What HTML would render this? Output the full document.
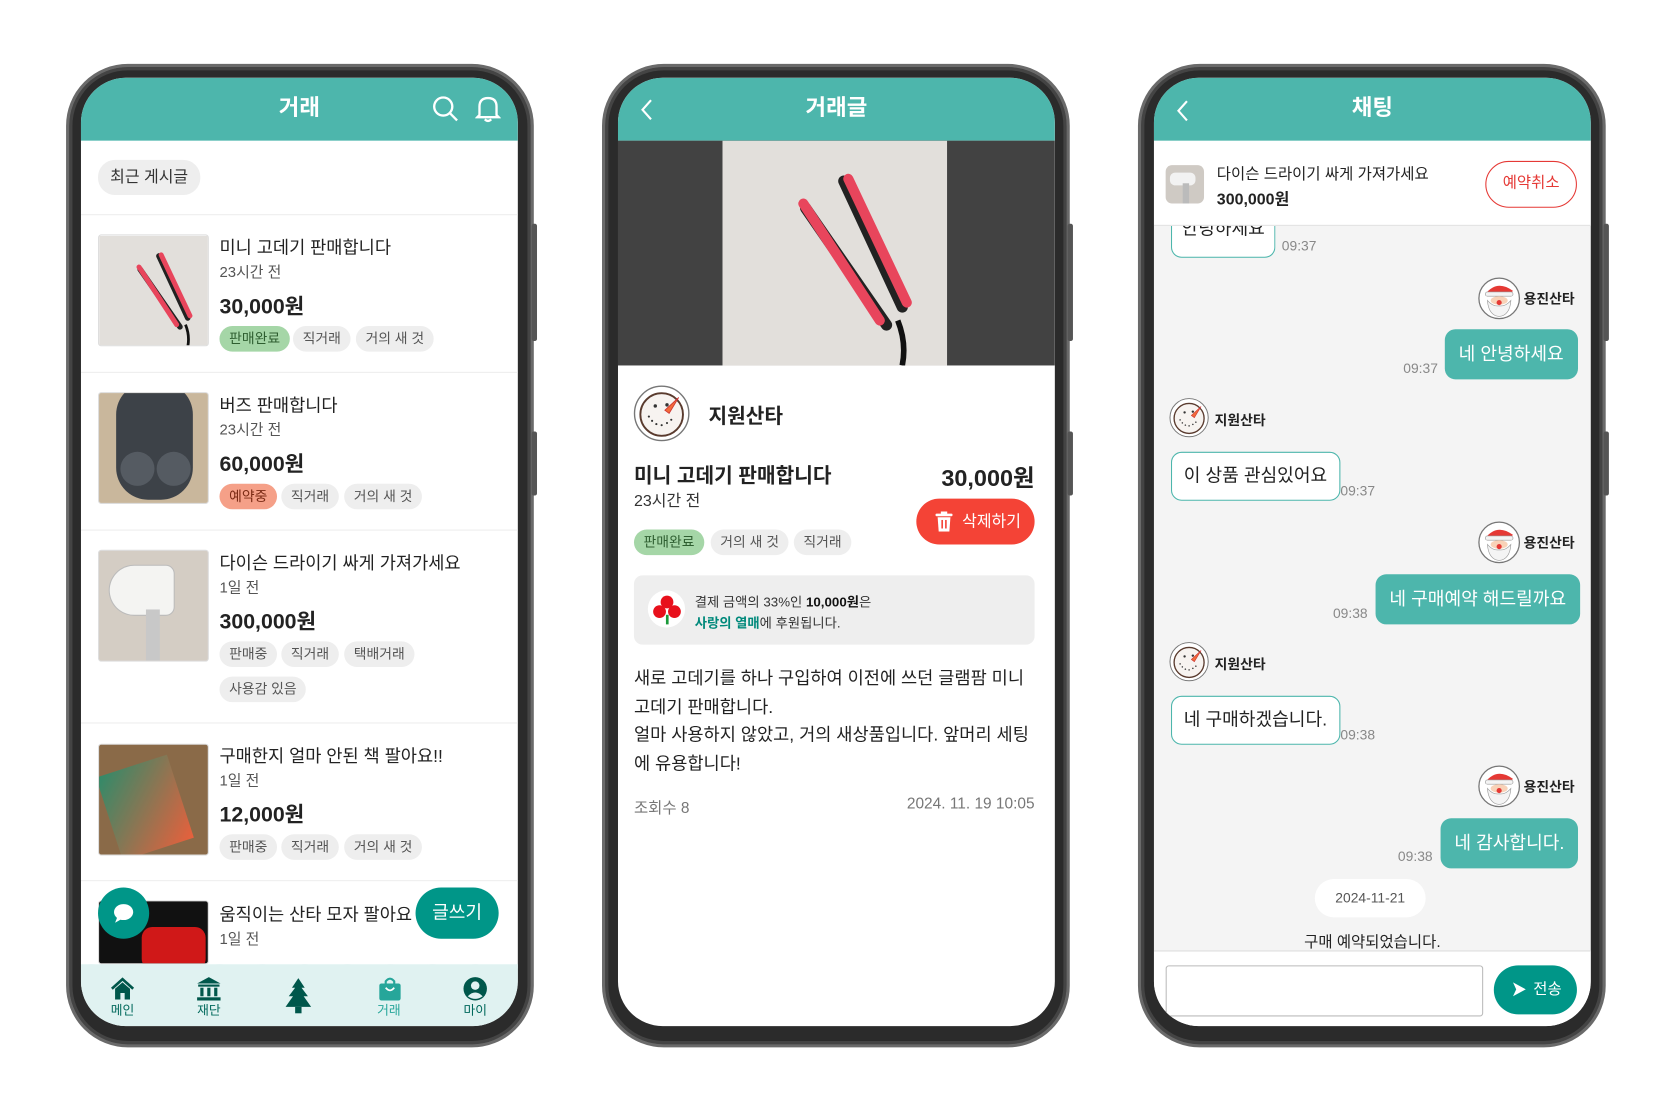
<!DOCTYPE html>
<html><head><meta charset="utf-8">
<style>
*{margin:0;padding:0;box-sizing:border-box}
html,body{width:1669px;height:1104px;overflow:hidden;background:#fff}
body{font-family:"Liberation Sans","Noto Sans CJK KR",sans-serif;color:#222}
#s{position:absolute;left:0;top:0;width:1560px;height:1032px;transform:scale(1.0655);transform-origin:0 0}
.a{position:absolute}
.phone{position:absolute;top:60px;width:439px;height:923px;border-radius:58px;background:#2b2b2b;border:3px solid #6a6a6a;box-shadow:inset 0 0 0 3px #444}
.screen{position:absolute;top:73px;width:410px;height:890px;border-radius:42px;overflow:hidden;background:#fff}
.hdr{position:absolute;left:0;top:0;width:410px;height:59px;background:#4db6ac;color:#fff;font-size:21px;font-weight:bold;text-align:center;line-height:58px}
.btn{position:absolute;width:5px;background:#555;border-radius:2px}
.tag{position:absolute;height:24px;line-height:24px;font-size:13px;color:#555;background:#eee;border-radius:12px;padding:0 9px}
.g{background:#a5d6a7;color:#2e5e30}
.o{background:#f5a088;color:#7a2a14}
.t1{font-size:16.5px;color:#222}
.t2{font-size:14px;color:#555}
.pr{font-size:20px;font-weight:bold;color:#222}
.div{position:absolute;left:0;width:410px;height:1px;background:#eee}
.th{position:absolute;left:16px;width:104px;height:105px;border:1px solid #ddd;border-radius:3px;overflow:hidden}
.wb{position:absolute;background:#fff;border:1.5px solid #4db6ac;border-radius:10px;font-size:17px;line-height:44px;padding:0 11px;color:#222}
.tb{position:absolute;background:#4db6ac;border-radius:10px;font-size:17px;line-height:47px;padding:0 13px;color:#fff}
.tm{position:absolute;font-size:13px;color:#888}
.nm{position:absolute;font-size:13px;font-weight:bold;color:#222}
.nav{position:absolute;font-size:12px;color:#00695c;text-align:center;width:40px}
</style></head><body>
<svg width="0" height="0" style="position:absolute">
<defs>
<symbol id="iron" viewBox="0 0 100 100">
<rect width="100" height="100" fill="#e2dfdb"/>
<path d="M78 80 Q82 90 80 100" stroke="#111" stroke-width="2.5" fill="none"/>
<path d="M37 30 L73 82" stroke="#222" stroke-width="5" stroke-linecap="round"/>
<path d="M54 18 L80 74" stroke="#222" stroke-width="5" stroke-linecap="round"/>
<path d="M36 28 L70 80" stroke="#e8455c" stroke-width="4.5" stroke-linecap="round"/>
<path d="M56 17 L82 72" stroke="#e8455c" stroke-width="4.5" stroke-linecap="round"/>
</symbol>
<symbol id="snow" viewBox="0 0 54 54">
<circle cx="27" cy="27" r="25.5" fill="#fff" stroke="#777" stroke-width="1.3"/>
<circle cx="27" cy="28" r="20" fill="#f7f3f0" stroke="#5a3b2e" stroke-width="1.8"/>
<circle cx="21" cy="20" r="1.6" fill="#333"/><circle cx="32" cy="19" r="1.6" fill="#333"/>
<path d="M30 24 L43 12 L34 27Z" fill="#f26b3a" stroke="#c33" stroke-width=".8"/>
<g fill="#333"><circle cx="15" cy="30" r="1"/><circle cx="18" cy="34" r="1"/><circle cx="22" cy="37" r="1"/><circle cx="27" cy="38" r="1"/><circle cx="32" cy="36" r="1"/><circle cx="36" cy="33" r="1"/></g>
</symbol>
<symbol id="santa" viewBox="0 0 40 40">
<circle cx="20" cy="20" r="19" fill="#fff" stroke="#777" stroke-width="1.2"/>
<path d="M7 16 Q18 2 33 13 L30 16 Z" fill="#e53935"/>
<rect x="7" y="14" width="26" height="4" rx="2" fill="#f4f4f4" stroke="#999" stroke-width=".6"/>
<ellipse cx="20" cy="22" rx="8" ry="4" fill="#f8d2b8"/>
<path d="M9 22 Q10 36 20 37 Q30 36 31 22 Q26 28 20 27 Q14 28 9 22Z" fill="#f4f4f4" stroke="#999" stroke-width=".6"/>
<circle cx="20" cy="24" r="2.4" fill="#e53935"/>
</symbol>
</defs></svg>
<div id="s">

<!-- PHONE 1 -->
<div class="phone" style="left:62px"></div>
<div class="btn" style="left:499px;top:210px;height:110px"></div>
<div class="btn" style="left:499px;top:405px;height:60px"></div>
<div class="screen" style="left:76px">
 <div class="hdr">거래</div>
 <svg class="a" style="left:329px;top:16px" width="26" height="26" viewBox="0 0 26 26" fill="none" stroke="#fff" stroke-width="2.2"><circle cx="11" cy="11" r="8.5"/><path d="M17.5 17.5 L24 24"/></svg>
 <svg class="a" style="left:370px;top:15px" width="24" height="28" viewBox="0 0 24 28" fill="none" stroke="#fff" stroke-width="2.2"><path d="M4 20 V12 Q4 4 12 4 Q20 4 20 12 V20 L22 22 H2 Z"/><path d="M9 24 Q12 27 15 24"/></svg>
 <div class="a" style="left:16px;top:77px;width:96px;height:33px;background:#eee;border-radius:16px;font-size:15px;line-height:33px;text-align:center;color:#333">최근 게시글</div>
 <div class="div" style="top:128px"></div>
 <!-- item1 -->
 <div class="th" style="top:147px"><svg width="104" height="105"><use href="#iron"/></svg></div>
 <div class="a t1" style="left:130px;top:146px">미니 고데기 판매합니다</div>
 <div class="a t2" style="left:130px;top:172px">23시간 전</div>
 <div class="a pr" style="left:130px;top:198px">30,000원</div>
 <div class="tag g" style="left:130px;top:233px">판매완료</div>
 <div class="tag" style="left:199px;top:233px">직거래</div>
 <div class="tag" style="left:258px;top:233px">거의 새 것</div>
 <div class="div" style="top:276px"></div>
 <!-- item2 -->
 <div class="th" style="top:295px;background:#c9b79c"><div class="a" style="left:16px;top:-10px;width:72px;height:110px;background:#3d4248;border-radius:30px"></div><div class="a" style="left:20px;top:55px;width:32px;height:32px;background:#555b62;border-radius:50%"></div><div class="a" style="left:54px;top:55px;width:32px;height:32px;background:#555b62;border-radius:50%"></div></div>
 <div class="a t1" style="left:130px;top:294px">버즈 판매합니다</div>
 <div class="a t2" style="left:130px;top:320px">23시간 전</div>
 <div class="a pr" style="left:130px;top:346px">60,000원</div>
 <div class="tag o" style="left:130px;top:381px">예약중</div>
 <div class="tag" style="left:188px;top:381px">직거래</div>
 <div class="tag" style="left:247px;top:381px">거의 새 것</div>
 <div class="div" style="top:424px"></div>
 <!-- item3 -->
 <div class="th" style="top:443px;background:#d4cdc4"><div class="a" style="left:10px;top:14px;width:60px;height:46px;background:#f4f4f2;border-radius:25px 8px 8px 25px;box-shadow:0 0 0 1px #bbb"></div><div class="a" style="left:44px;top:55px;width:13px;height:48px;background:#c8c8c8"></div></div>
 <div class="a t1" style="left:130px;top:442px">다이슨 드라이기 싸게 가져가세요</div>
 <div class="a t2" style="left:130px;top:468px">1일 전</div>
 <div class="a pr" style="left:130px;top:494px">300,000원</div>
 <div class="tag" style="left:130px;top:529px">판매중</div>
 <div class="tag" style="left:188px;top:529px">직거래</div>
 <div class="tag" style="left:247px;top:529px">택배거래</div>
 <div class="tag" style="left:130px;top:562px">사용감 있음</div>
 <div class="div" style="top:605px"></div>
 <!-- item4 -->
 <div class="th" style="top:625px;background:#8a6a48"><div class="a" style="left:8px;top:18px;width:70px;height:82px;background:linear-gradient(135deg,#2e8b6a,#e8603c);transform:rotate(-18deg)"></div></div>
 <div class="a t1" style="left:130px;top:623px">구매한지 얼마 안된 책 팔아요!!</div>
 <div class="a t2" style="left:130px;top:649px">1일 전</div>
 <div class="a pr" style="left:130px;top:675px">12,000원</div>
 <div class="tag" style="left:130px;top:710px">판매중</div>
 <div class="tag" style="left:188px;top:710px">직거래</div>
 <div class="tag" style="left:247px;top:710px">거의 새 것</div>
 <div class="div" style="top:753px"></div>
 <!-- item5 -->
 <div class="th" style="top:772px;height:60px;background:#111"><div class="a" style="left:40px;top:24px;width:60px;height:40px;background:#d01818;border-radius:10px"></div></div>
 <div class="a t1" style="left:130px;top:772px">움직이는 산타 모자 팔아요</div>
 <div class="a t2" style="left:130px;top:798px">1일 전</div>
 <div class="a" style="left:16px;top:760px;width:48px;height:48px;border-radius:50%;background:#009688"></div>
 <svg class="a" style="left:29px;top:774px" width="22" height="20" viewBox="0 0 22 20"><ellipse cx="11" cy="9" rx="9" ry="7.5" fill="#fff"/><path d="M5 14 L3 19 L10 15Z" fill="#fff"/></svg>
 <div class="a" style="left:314px;top:760px;width:78px;height:48px;border-radius:24px;background:#009688;color:#fff;font-size:17px;line-height:48px;text-align:center">글쓰기</div>
 <!-- nav -->
 <div class="a" style="left:0;top:832px;width:410px;height:58px;background:#e0f2f1"></div>
 <svg class="a" style="left:0;top:828px" width="410" height="8"><path d="M0 6 Q10 2 20 6 T40 6 T60 6 T80 6 T100 6 T120 6 T140 6 T160 6 T180 6 T200 6 T220 6 T240 6 T260 6 T280 6 T300 6 T320 6 T340 6 T360 6 T380 6 T400 6 T420 6 V8 H0Z" fill="#e0f2f1"/></svg>
 <svg class="a" style="left:27px;top:844px" width="24" height="22" viewBox="0 0 24 22"><path d="M2 11 L12 2 L22 11" stroke="#00574b" stroke-width="2.5" fill="none"/><path d="M5 11 V21 H10 V15 H14 V21 H19 V11 L12 5Z" fill="#00574b"/></svg>
 <div class="nav" style="left:19px;top:866px">메인</div>
 <svg class="a" style="left:108px;top:843px" width="24" height="24" viewBox="0 0 24 24" fill="#00574b"><path d="M12 1 L23 7 H1Z"/><rect x="2" y="8" width="20" height="2"/><rect x="4" y="11" width="3" height="8"/><rect x="10.5" y="11" width="3" height="8"/><rect x="17" y="11" width="3" height="8"/><rect x="1" y="20" width="22" height="3"/></svg>
 <div class="nav" style="left:100px;top:866px">재단</div>
 <svg class="a" style="left:191px;top:845px" width="26" height="36" viewBox="0 0 26 36" fill="#00574b"><path d="M13 0 L19 9 H16 L22 17 H18 L25 27 H1 L8 17 H4 L10 9 H7Z"/><rect x="10" y="27" width="6" height="6"/></svg>
 <svg class="a" style="left:279px;top:843px" width="22" height="24" viewBox="0 0 22 24"><rect x="1" y="7" width="20" height="16" rx="2" fill="#26a69a"/><path d="M7 9 V5 Q11 0 15 5 V9" stroke="#26a69a" stroke-width="2" fill="none"/><path d="M7 11 Q11 16 15 11" stroke="#fff" stroke-width="1.6" fill="none"/></svg>
 <div class="nav" style="left:269px;top:866px;color:#26a69a">거래</div>
 <svg class="a" style="left:358px;top:843px" width="24" height="24" viewBox="0 0 24 24"><circle cx="12" cy="12" r="11" fill="#00574b"/><circle cx="12" cy="9" r="4" fill="#e0f2f1"/><path d="M5 19 Q12 12 19 19 Q12 24 5 19Z" fill="#e0f2f1"/></svg>
 <div class="nav" style="left:350px;top:866px">마이</div>
</div>

<!-- PHONE 2 -->
<div class="phone" style="left:565px"></div>
<div class="btn" style="left:1002px;top:210px;height:110px"></div>
<div class="btn" style="left:1002px;top:405px;height:60px"></div>
<div class="screen" style="left:580px">
 <div class="hdr">거래글</div>
 <svg class="a" style="left:20px;top:19px" width="14" height="22" viewBox="0 0 14 22"><path d="M11 2 L3 11 L11 20" stroke="#fff" stroke-width="2" fill="none"/></svg>
 <div class="a" style="left:0;top:59px;width:410px;height:211px;background:#424242"></div>
 <svg class="a" style="left:98px;top:59px" width="211" height="211"><use href="#iron"/></svg>
 <svg class="a" style="left:14px;top:288px" width="54" height="54"><use href="#snow"/></svg>
 <div class="a" style="left:85px;top:303px;font-size:19px;font-weight:bold">지원산타</div>
 <div class="a" style="left:15px;top:359px;font-size:19px;font-weight:bold">미니 고데기 판매합니다</div>
 <div class="a" style="left:15px;top:386px;font-size:15px;color:#333">23시간 전</div>
 <div class="a" style="right:19px;top:358px;font-size:22px;font-weight:bold">30,000원</div>
 <div class="tag g" style="left:15px;top:424px;padding:0 9px">판매완료</div>
 <div class="tag" style="left:87px;top:424px;padding:0 9px">거의 새 것</div>
 <div class="tag" style="left:165px;top:424px;padding:0 9px">직거래</div>
 <div class="a" style="left:280px;top:395px;width:111px;height:43px;border-radius:22px;background:#f44336;color:#fff;font-size:15px;line-height:43px;padding-left:43px">삭제하기</div>
 <svg class="a" style="left:298px;top:407px" width="16" height="19" viewBox="0 0 16 19" fill="#fff"><rect x="0" y="2" width="16" height="2.5" rx="1"/><rect x="5" y="0" width="6" height="3"/><path d="M2 5.5 H14 L13 19 H3Z"/><rect x="5.5" y="8" width="1.5" height="8" fill="#f44336"/><rect x="9" y="8" width="1.5" height="8" fill="#f44336"/></svg>
 <div class="a" style="left:15px;top:467px;width:376px;height:65px;background:#eee;border-radius:8px"></div>
 <div class="a" style="left:28px;top:481px;width:35px;height:35px;border-radius:50%;background:#fff"></div>
 <svg class="a" style="left:31px;top:484px" width="30" height="30" viewBox="0 0 30 30" fill="#e8101c"><circle cx="15" cy="8" r="6"/><circle cx="8" cy="17" r="6"/><circle cx="22" cy="17" r="6"/><rect x="14" y="20" width="2.5" height="9" fill="#1a9a3a"/></svg>
 <div class="a" style="left:72px;top:481px;font-size:12.5px;color:#333">결제 금액의 33%인 <b style="color:#111">10,000원</b>은</div>
 <div class="a" style="left:72px;top:501px;font-size:12.5px;color:#333"><span style="color:#00897b;font-weight:bold">사랑의 열매</span>에 후원됩니다.</div>
 <div class="a" style="left:15px;top:551px;width:380px;font-size:16.5px;line-height:26.7px;color:#222">새로 고데기를 하나 구입하여 이전에 쓰던 글램팜 미니<br>고데기 판매합니다.<br>얼마 사용하지 않았고, 거의 새상품입니다. 앞머리 세팅<br>에 유용합니다!</div>
 <div class="a" style="left:15px;top:674px;font-size:14.5px;color:#777">조회수 8</div>
 <div class="a" style="right:19px;top:674px;font-size:14.5px;color:#777">2024. 11. 19 10:05</div>
</div>

<!-- PHONE 3 -->
<div class="phone" style="left:1068px"></div>
<div class="btn" style="left:1505px;top:210px;height:110px"></div>
<div class="btn" style="left:1505px;top:405px;height:60px"></div>
<div class="screen" style="left:1083px;background:#f4f4f4">
 <div class="a" style="left:0;top:59px;width:410px;height:80px;background:#fff;border-bottom:1px solid #e0e0e0"></div>
 <div class="hdr">채팅</div>
 <svg class="a" style="left:20px;top:20px" width="14" height="22" viewBox="0 0 14 22"><path d="M11 2 L3 11 L11 20" stroke="#fff" stroke-width="2" fill="none"/></svg>
 <div class="a" style="left:11px;top:82px;width:36px;height:36px;border-radius:6px;background:#cfcac4;overflow:hidden"><div class="a" style="left:4px;top:7px;width:24px;height:12px;background:#f2f2f2;border-radius:5px"></div><div class="a" style="left:16px;top:17px;width:6px;height:19px;background:#bbb"></div></div>
 <div class="a" style="left:59px;top:79px;font-size:14.5px;color:#222">다이슨 드라이기 싸게 가져가세요</div>
 <div class="a" style="left:59px;top:103px;font-size:15px;font-weight:bold">300,000원</div>
 <div class="a" style="left:311px;top:78px;width:86px;height:44px;border:1.5px solid #e53935;border-radius:22px;color:#e53935;font-size:14.5px;text-align:center;line-height:41px">예약취소</div>
 <!-- top partial bubble -->
 <div class="a" style="left:16px;top:139px;width:98px;height:30px;background:#fff;border:1.5px solid #4db6ac;border-top:none;border-radius:0 0 10px 10px;overflow:hidden"><div style="font-size:17px;text-align:center;margin-top:-10px;line-height:26px">안녕하세요</div></div>
 <div class="tm" style="left:120px;top:150px">09:37</div>
 <svg class="a" style="left:304px;top:187px" width="40" height="40"><use href="#santa"/></svg>
 <div class="nm" style="left:347px;top:197px">용진산타</div>
 <div class="tb" style="left:273px;top:236px">네 안녕하세요</div>
 <div class="tm" style="left:234px;top:265px">09:37</div>
 <svg class="a" style="left:14px;top:300px" width="38" height="38" viewBox="0 0 54 54"><use href="#snow"/></svg>
 <div class="nm" style="left:57px;top:311px">지원산타</div>
 <div class="wb" style="left:16px;top:351px">이 상품 관심있어요</div>
 <div class="tm" style="left:175px;top:380px">09:37</div>
 <svg class="a" style="left:304px;top:416px" width="40" height="40"><use href="#santa"/></svg>
 <div class="nm" style="left:347px;top:426px">용진산타</div>
 <div class="tb" style="left:208px;top:466px">네 구매예약 해드릴까요</div>
 <div class="tm" style="left:168px;top:495px">09:38</div>
 <svg class="a" style="left:14px;top:529px" width="38" height="38" viewBox="0 0 54 54"><use href="#snow"/></svg>
 <div class="nm" style="left:57px;top:540px">지원산타</div>
 <div class="wb" style="left:16px;top:580px">네 구매하겠습니다.</div>
 <div class="tm" style="left:175px;top:609px">09:38</div>
 <svg class="a" style="left:304px;top:645px" width="40" height="40"><use href="#santa"/></svg>
 <div class="nm" style="left:347px;top:655px">용진산타</div>
 <div class="tb" style="left:269px;top:695px">네 감사합니다.</div>
 <div class="tm" style="left:229px;top:723px">09:38</div>
 <div class="a" style="left:151px;top:752px;width:104px;height:36px;border-radius:18px;background:#fff;font-size:13px;color:#555;text-align:center;line-height:36px">2024-11-21</div>
 <div class="a" style="left:0;top:800px;width:410px;text-align:center;font-size:14.5px;color:#222">구매 예약되었습니다.</div>
 <div class="a" style="left:0;top:819px;width:410px;height:71px;background:#fff;border-top:1px solid #ddd"></div>
 <div class="a" style="left:11px;top:833px;width:298px;height:48px;border:1.5px solid #bbb;border-radius:3px;background:#fff"></div>
 <div class="a" style="left:319px;top:833px;width:78px;height:46px;border-radius:23px;background:#009688;color:#fff;font-size:14.5px;line-height:46px;padding-left:37px">전송</div>
 <svg class="a" style="left:336px;top:848px" width="14" height="15" viewBox="0 0 14 15"><path d="M1 1 L13 7.5 L1 14 L4 7.5Z" fill="#fff"/></svg>
</div>

</div>
</body></html>
